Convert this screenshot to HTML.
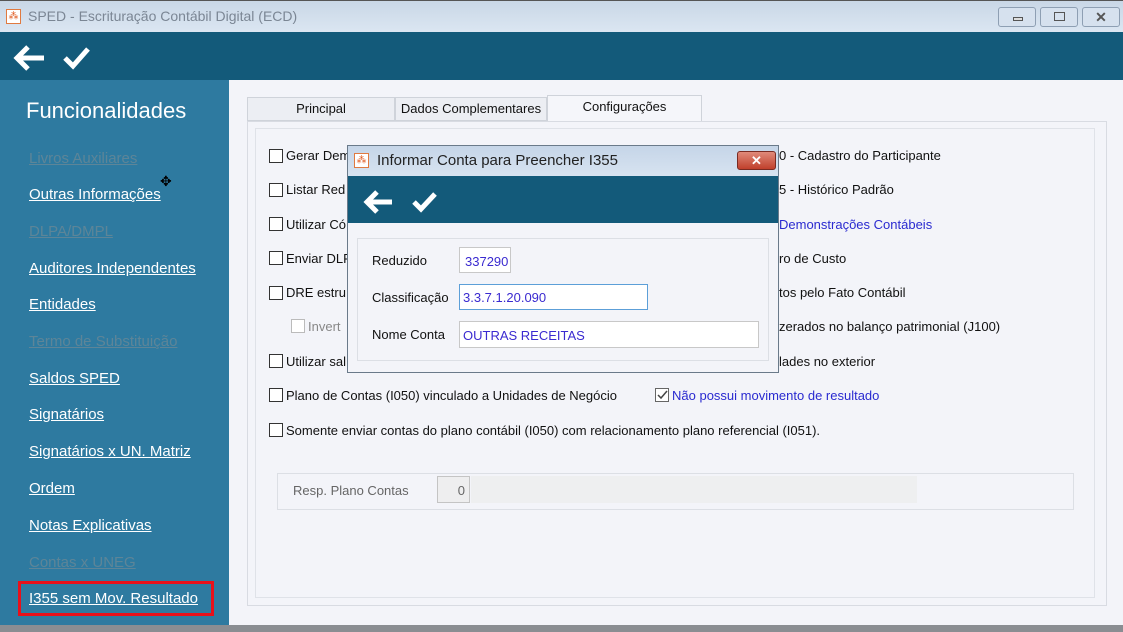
<!DOCTYPE html>
<html><head><meta charset="utf-8"><style>
*{margin:0;padding:0;box-sizing:border-box}
body{width:1123px;height:632px;overflow:hidden;background:#f3f4f9;font-family:"Liberation Sans",sans-serif;position:relative}
.a{position:absolute}
.title{left:0;top:0;width:1123px;height:32px;background:linear-gradient(#c9d7e6,#dbe6f2);border-top:1px solid #555}
.bar{left:0;top:32px;width:1123px;height:48px;background:#135a7a}
.side{left:0;top:80px;width:229px;height:545px;background:#2e7aa0}
.mi{position:absolute;left:29px;font-size:15px;color:#fff;text-decoration:underline;white-space:nowrap}
.mi.d{color:#5d8598}
.cb{position:absolute;width:14px;height:14px;border:1px solid #333;background:#fff}
.t{position:absolute;font-size:13px;color:#111;white-space:nowrap}
.tab{position:absolute;top:97px;height:24px;border:1px solid #cfd3da;background:#eceef3;font-size:13px;text-align:center;line-height:22px;color:#111}
.bot{left:0;top:625px;width:1123px;height:7px;background:#8a8d92}
</style></head><body>
<div class="a title"></div>
<div class="a" style="left:6px;top:9px;width:15px;height:15px;background:#fff;border:1px solid #e07a40;color:#e05a20;font-size:10px;line-height:13px;text-align:center">⁂</div>
<div class="a" style="left:28px;top:8px;font-size:14px;color:#7b8694">SPED - Escrituração Contábil Digital (ECD)</div>
<div class="a" style="left:998px;top:7px;width:38px;height:20px;border:1px solid #8e9fb3;border-radius:3px;background:#d6e1ee"><div class="a" style="left:14px;top:9px;width:10px;height:4px;border:1px solid #555;background:#ddd"></div></div>
<div class="a" style="left:1040px;top:7px;width:38px;height:20px;border:1px solid #8e9fb3;border-radius:3px;background:#d6e1ee"><div class="a" style="left:13px;top:4px;width:11px;height:9px;border:1px solid #555"></div></div>
<div class="a" style="left:1082px;top:7px;width:38px;height:20px;border:1px solid #8e9fb3;border-radius:3px;background:#d6e1ee;text-align:center;font-size:14px;line-height:18px;color:#555;font-weight:bold">✕</div>
<div class="a bar"></div>
<svg class="a" style="left:12px;top:43px" width="80" height="30"><path d="M4 15H32M16 4L5 15L16 26" stroke="#fff" stroke-width="5" fill="none"/><path d="M53 15L61 23L76 6" stroke="#fff" stroke-width="5" fill="none"/></svg>
<div class="a side">
<div class="a" style="left:26px;top:18px;font-size:22px;color:#fff">Funcionalidades</div>
<div class="mi d" style="top:70px">Livros Auxiliares</div>
<div class="mi" style="top:106px">Outras Informações</div>
<div class="mi d" style="top:143px">DLPA/DMPL</div>
<div class="mi" style="top:180px">Auditores Independentes</div>
<div class="mi" style="top:216px">Entidades</div>
<div class="mi d" style="top:253px">Termo de Substituição</div>
<div class="mi" style="top:290px">Saldos SPED</div>
<div class="mi" style="top:326px">Signatários</div>
<div class="mi" style="top:363px">Signatários x UN. Matriz</div>
<div class="mi" style="top:400px">Ordem</div>
<div class="mi" style="top:437px">Notas Explicativas</div>
<div class="mi d" style="top:474px">Contas x UNEG</div>
<div class="mi" style="top:510px">I355 sem Mov. Resultado</div>
<div class="a" style="left:18px;top:501px;width:196px;height:35px;border:3px solid #e8101a"></div>
</div>
<div class="a" style="left:160px;top:173px;font-size:14px;color:#000">✥</div>
<div class="tab" style="left:247px;width:148px">Principal</div>
<div class="tab" style="left:395px;width:152px">Dados Complementares</div>
<div class="tab" style="left:547px;top:95px;height:27px;width:155px;background:#f5f6fa;border-bottom:none">Configurações</div>
<div class="a" style="left:247px;top:121px;width:860px;height:485px;border:1px solid #d8dbe2"></div>
<div class="a" style="left:255px;top:128px;width:840px;height:470px;border:1px solid #dfe2e8"></div>
<div class="cb" style="left:269px;top:149px"></div><div class="t" style="left:286px;top:148px">Gerar Dem</div>
<div class="cb" style="left:269px;top:183px"></div><div class="t" style="left:286px;top:182px">Listar Red</div>
<div class="cb" style="left:269px;top:217px"></div><div class="t" style="left:286px;top:217px">Utilizar Có</div>
<div class="cb" style="left:269px;top:251px"></div><div class="t" style="left:286px;top:251px">Enviar DLP</div>
<div class="cb" style="left:269px;top:286px"></div><div class="t" style="left:286px;top:285px">DRE estru</div>
<div class="cb" style="left:291px;top:319px;border-color:#bbb"></div><div class="t" style="left:308px;top:319px;color:#888">Invert</div>
<div class="cb" style="left:269px;top:354px"></div><div class="t" style="left:286px;top:354px">Utilizar sal</div>
<div class="cb" style="left:269px;top:388px"></div><div class="t" style="left:286px;top:388px">Plano de Contas (I050) vinculado a Unidades de Negócio</div>
<div class="cb" style="left:655px;top:388px;border-color:#666"><svg class="a" style="left:0;top:0" width="12" height="12"><path d="M2 6L5 9L11 2" stroke="#444" stroke-width="1.5" fill="none"/></svg></div><div class="t" style="left:672px;top:388px;color:#2a2ad0">Não possui movimento de resultado</div>
<div class="cb" style="left:269px;top:423px"></div><div class="t" style="left:286px;top:423px">Somente enviar contas do plano contábil (I050) com relacionamento plano referencial (I051).</div>
<div class="t" style="left:779px;top:148px">0 - Cadastro do Participante</div>
<div class="t" style="left:779px;top:182px">5 - Histórico Padrão</div>
<div class="t" style="left:779px;top:217px;color:#2a2ad0">Demonstrações Contábeis</div>
<div class="t" style="left:779px;top:251px">ro de Custo</div>
<div class="t" style="left:779px;top:285px">tos pelo Fato Contábil</div>
<div class="t" style="left:779px;top:319px">zerados no balanço patrimonial (J100)</div>
<div class="t" style="left:779px;top:354px">lades no exterior</div>
<div class="a" style="left:277px;top:473px;width:797px;height:37px;border:1px solid #dcdfe5"></div>
<div class="t" style="left:293px;top:483px;color:#666">Resp. Plano Contas</div>
<div class="a" style="left:437px;top:476px;width:33px;height:27px;border:1px solid #c4c4c4;background:#eeeeef;font-size:13px;color:#666;text-align:right;padding:6px 4px 0 0">0</div>
<div class="a" style="left:471px;top:476px;width:446px;height:27px;background:#eeeff0"></div>
<!-- dialog -->
<div class="a" style="left:347px;top:145px;width:432px;height:228px;border:1px solid #6a7a8a;background:#f3f4f9">
<div class="a" style="left:0;top:0;width:430px;height:30px;background:linear-gradient(#c5d5e8,#d7e3f0)"></div>
<div class="a" style="left:6px;top:7px;width:15px;height:15px;background:#fff;border:1px solid #e07a40;color:#e05a20;font-size:10px;line-height:13px;text-align:center">⁂</div>
<div class="a" style="left:29px;top:6px;font-size:15px;color:#222">Informar Conta para Preencher I355</div>
<div class="a" style="left:389px;top:5px;width:39px;height:19px;border:1px solid #7a2b22;border-radius:3px;background:linear-gradient(#e08a7a,#c0402c);color:#fff;font-weight:bold;font-size:13px;text-align:center;line-height:17px">✕</div>
<div class="a" style="left:0;top:30px;width:430px;height:47px;background:#135a7a"></div>
<svg class="a" style="left:14px;top:42px" width="80" height="28"><path d="M4 14H30M15 4L5 14L15 24" stroke="#fff" stroke-width="5" fill="none"/><path d="M52 14L59 21L73 6" stroke="#fff" stroke-width="5" fill="none"/></svg>
<div class="a" style="left:9px;top:92px;width:412px;height:123px;border:1px solid #dcdfe5"></div>
<div class="t" style="left:24px;top:107px">Reduzido</div>
<div class="a" style="left:111px;top:101px;width:52px;height:26px;border:1px solid #c8c8c8;background:#fff;font-size:13px;color:#3a2ad0;padding:6px 0 0 5px">337290</div>
<div class="t" style="left:24px;top:144px">Classificação</div>
<div class="a" style="left:111px;top:138px;width:189px;height:26px;border:1px solid #5c9fd8;background:#fff;font-size:13px;color:#3a2ad0;padding:5px 0 0 3px">3.3.7.1.20.090</div>
<div class="t" style="left:24px;top:181px">Nome Conta</div>
<div class="a" style="left:111px;top:175px;width:300px;height:27px;border:1px solid #c8c8c8;background:#fff;font-size:13px;color:#3a2ad0;padding:6px 0 0 3px">OUTRAS RECEITAS</div>
</div>
<div class="a bot"></div>
</body></html>
